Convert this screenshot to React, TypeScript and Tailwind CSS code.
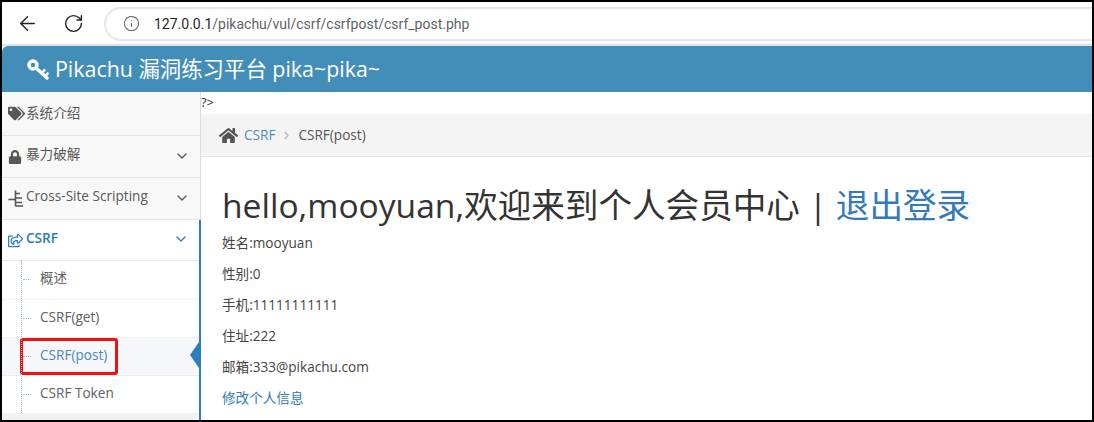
import { ArrowLeft, RotateCw, Info, ChevronDown, ChevronRight } from "lucide-react";
import { FaTags, FaLock, FaHome, FaRegShareSquare } from "react-icons/fa";

const font = "font-['Open_Sans','Noto_Sans_CJK_SC',sans-serif]";

function KeyIcon() {
  return (
    <svg width="24" height="22" viewBox="0 0 24 22" fill="none" stroke="white" className="mr-[5px] shrink-0">
      <circle cx="7" cy="7" r="4" strokeWidth="3.4" />
      <path d="M10 10 L21 20" strokeWidth="3.4" strokeLinecap="round" />
      <path d="M15.5 15 L18.5 12.2 M19 18.4 L21.6 15.6" strokeWidth="2.6" strokeLinecap="round" />
    </svg>
  );
}

function XssIcon() {
  return (
    <svg width="16" height="18" viewBox="0 0 16 18" fill="none" stroke="#555" strokeWidth="1.6">
      <path d="M7.5 0.5 V16.5" />
      <path d="M0.5 9.5 H7" />
      <path d="M8 3.5 H12 M8 8 H14 M8 12.5 H14 M8 16 H15" />
    </svg>
  );
}

function TopItem({ icon, label, height, chevron = true, active = false }: { icon: React.ReactNode; label: string; height: string; chevron?: boolean; active?: boolean }) {
  return (
    <div className={`flex ${height} shrink-0 items-center border-b border-[#e5e5e5] pl-[6px] pr-[10px] text-[13.6px] ${active ? "bg-white font-semibold text-[#2b7dbc]" : "bg-[#f8f8f8] text-[#585858]"}`}>
      <span className="flex w-[18px] shrink-0 items-center">{icon}</span>
      <span className={`flex-1 whitespace-nowrap ${chevron ? "pb-[4px]" : ""}`}>{label}</span>
      {chevron && <ChevronDown size={16} strokeWidth={2} className="mb-[2px]" />}
    </div>
  );
}

function SubItem({ label, height, active = false }: { label: string; height: string; active?: boolean }) {
  return (
    <div className={`relative flex ${height} shrink-0 items-center border-b border-dotted border-[#e4e4e4] pb-[3px] pl-[38px] text-[13.6px] ${active ? "bg-[#f5f7fa] text-[#4b88b8]" : "text-[#616161]"}`}>
      <span className="absolute left-[21px] top-[18px] h-0 w-[8px] border-t border-dotted border-[#9dbdd6]" />
      {label}
      {active && (
        <>
          <span className="absolute left-[18px] top-0 h-[37px] w-[98px] rounded-[3px] border-[3px] border-[#f01010]" />
          <span className="absolute right-0 top-[4px] h-0 w-0 border-y-[13px] border-r-[9px] border-y-transparent border-r-[#2b7dbc]" />
        </>
      )}
    </div>
  );
}

export default function App() {
  return (
    <div className={`${font} flex h-[422px] w-[1094px] flex-col overflow-hidden border-2 border-black bg-white`}>
      <div className="flex h-[44px] shrink-0 items-center border-b-2 border-[#e2e2e2] bg-white pt-[1px]">
        <ArrowLeft size={23} strokeWidth={1.5} className="ml-[14px] text-[#222]" />
        <RotateCw size={21} strokeWidth={1.6} className="ml-[24px] text-[#222]" />
        <div className="ml-[20px] flex h-[34px] flex-1 items-center rounded-l-[17px] border-y-2 border-l-2 border-[#e6e6e6] pl-[17px] font-['Roboto','Inter',sans-serif] text-[14px]">
          <Info size={17} strokeWidth={1.5} className="text-[#5f5f5f]" />
          <span className="ml-[14px] pt-[1px] text-[#1f1f1f]">127.0.0.1</span>
          <span className="pt-[1px] text-[#5f6368]">/pikachu/vul/csrf/csrfpost/csrf_post.php</span>
        </div>
      </div>
      <div className="flex h-[46px] shrink-0 items-center rounded-tl-[6px] bg-[#438eb9] pl-[24px] text-[21.4px] text-white">
        <KeyIcon />
        <span>Pikachu 漏洞练习平台 pika~pika~</span>
      </div>
      <div className="flex min-h-0 flex-1">
        <div className="flex w-[199px] shrink-0 flex-col">
          <div className="flex flex-col border-r border-[#dcdcdc]">
            <TopItem height="h-[44px]" icon={<FaTags size={17} />} label="系统介绍" chevron={false} />
            <TopItem height="h-[42px]" icon={<FaLock size={14} />} label="暴力破解" />
            <TopItem height="h-[42px]" icon={<XssIcon />} label="Cross-Site Scripting" />
          </div>
          <div className="relative flex flex-1 flex-col border-r-2 border-[#2b7dbc]">
            <TopItem height="h-[41px]" icon={<FaRegShareSquare size={15} />} label="CSRF" active />
            <SubItem height="h-[39px]" label="概述" />
            <SubItem height="h-[38px]" label="CSRF(get)" />
            <SubItem height="h-[38px]" label="CSRF(post)" active />
            <SubItem height="h-[38px]" label="CSRF Token" />
            <div className="flex-1 bg-[#f2f2f2]" />
            <span className="absolute bottom-[7px] left-[19px] top-[41px] border-l border-dotted border-[#9dbdd6]" />
          </div>
        </div>
        <div className="min-w-0 flex-1 text-[13.6px] text-[#444]">
          <div className="h-[22px] pt-[1px] text-[13px] leading-[18px] text-[#333]">?&gt;</div>
          <div className="flex h-[43px] items-center border-b border-[#e5e5e5] bg-[#f4f4f4] pl-[18px]">
            <FaHome size={19} className="mr-[6px] text-[#555]" />
            <span className="text-[#4c8fbd]">CSRF</span>
            <ChevronRight size={13} className="mx-[5px] text-[#b2b6bf]" />
            <span className="text-[#555]">CSRF(post)</span>
          </div>
          <div className="pl-[21px]">
            <h1 className="mt-[26px] whitespace-nowrap text-[33.6px] leading-[44px] text-[#333]">
              hello,mooyuan,欢迎来到个人会员中心 | <span className="text-[#337ab7]">退出登录</span>
            </h1>
            <div className="mt-[6px] flex flex-col gap-[11px] leading-[20px]">
              <p>姓名:mooyuan</p>
              <p>性别:0</p>
              <p>手机:11111111111</p>
              <p>住址:222</p>
              <p>邮箱:333@pikachu.com</p>
              <p className="text-[#337ab7]">修改个人信息</p>
            </div>
          </div>
        </div>
      </div>
    </div>
  );
}
